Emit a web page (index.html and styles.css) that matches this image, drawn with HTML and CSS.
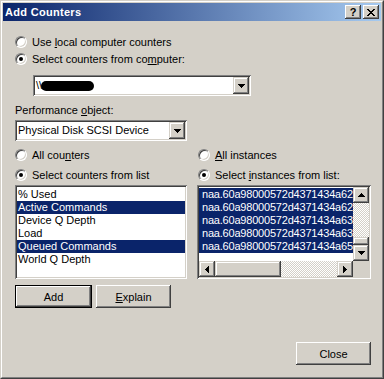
FILE: index.html
```html
<!DOCTYPE html>
<html>
<head>
<meta charset="utf-8">
<link rel="stylesheet" href="styles.css">
</head>
<body>
<div class="window">
  <div class="frame">
    <div class="titlebar">
      <span class="title">Add Counters</span>
      <div class="tbtns">
        <span class="tbtn q">?</span>
        <span class="tbtn">
          <svg width="8" height="7" viewBox="0 0 8 7" shape-rendering="crispEdges"><path d="M0 0h2v1h-2zM6 0h2v1h-2zM1 1h2v1h-2zM5 1h2v1h-2zM2 2h4v1h-4zM3 3h2v1h-2zM2 4h4v1h-4zM1 5h2v1h-2zM5 5h2v1h-2zM0 6h2v1h-2zM6 6h2v1h-2z" fill="#000"/></svg>
        </span>
      </div>
    </div>
    <div class="content">
      <div class="radio"><span class="rc"></span><span>Use <u>l</u>ocal computer counters</span></div>
      <div class="radio"><span class="rc on"></span><span>Select counters from co<u>m</u>puter:</span></div>
      <div class="combo c1">
        <span class="val">\\<span class="blob"></span></span>
        <span class="dd"><svg width="7" height="4" viewBox="0 0 7 4" shape-rendering="crispEdges"><path d="M0 0h7v1h-1v1h-1v1h-1v1h-1v-1h-1v-1h-1v-1h-1z"/></svg></span>
      </div>
      <div class="lbl">Performance <u>o</u>bject:</div>
      <div class="combo c2">
        <span class="val">Physical Disk SCSI Device</span>
        <span class="dd"><svg width="7" height="4" viewBox="0 0 7 4" shape-rendering="crispEdges"><path d="M0 0h7v1h-1v1h-1v1h-1v1h-1v-1h-1v-1h-1v-1h-1z"/></svg></span>
      </div>
      <div class="cols">
        <div class="col left">
          <div class="radio"><span class="rc"></span><span>All cou<u>n</u>ters</span></div>
          <div class="radio r2"><span class="rc on"></span><span>Select counters from list</span></div>
          <div class="list llist">
            <div class="item">% Used</div>
            <div class="item sel">Active Commands</div>
            <div class="item">Device Q Depth</div>
            <div class="item">Load</div>
            <div class="item sel">Queued Commands</div>
            <div class="item">World Q Depth</div>
          </div>
          <div class="btnrow">
            <div class="btn def">Add</div>
            <div class="btn"><span><u>E</u>xplain</span></div>
          </div>
        </div>
        <div class="col right">
          <div class="radio"><span class="rc"></span><span><u>A</u>ll instances</span></div>
          <div class="radio r2"><span class="rc on"></span><span>Select <u>i</u>nstances from list:</span></div>
          <div class="list rlist">
            <div class="items">
              <div class="item sel">naa.60a98000572d4371434a62</div>
              <div class="item sel">naa.60a98000572d4371434a62</div>
              <div class="item sel">naa.60a98000572d4371434a63</div>
              <div class="item sel">naa.60a98000572d4371434a63</div>
              <div class="item sel">naa.60a98000572d4371434a65</div>
            </div>
            <div class="vscroll">
              <span class="sbtn"><svg width="7" height="4" viewBox="0 0 7 4" shape-rendering="crispEdges"><path d="M3 0h1v1h1v1h1v1h1v1h-7v-1h1v-1h1v-1h1z"/></svg></span>
              <span class="track"><span class="vthumb"></span></span>
              <span class="sbtn"><svg width="7" height="4" viewBox="0 0 7 4" shape-rendering="crispEdges"><path d="M0 0h7v1h-1v1h-1v1h-1v1h-1v-1h-1v-1h-1v-1h-1z"/></svg></span>
            </div>
            <div class="hscroll">
              <span class="sbtn"><svg width="4" height="7" viewBox="0 0 4 7" shape-rendering="crispEdges"><path d="M3 0h1v7h-1v-1h-1v-1h-1v-1h-1v-1h1v-1h1v-1h1z"/></svg></span>
              <span class="htrack"><span class="hthumb"></span></span>
              <span class="sbtn"><svg width="4" height="7" viewBox="0 0 4 7" shape-rendering="crispEdges"><path d="M0 0h1v1h1v1h1v1h1v1h-1v1h-1v1h-1v1h-1z"/></svg></span>
            </div>
            <div class="corner"></div>
          </div>
        </div>
      </div>
      <div class="footer">
        <div class="btn close">Close</div>
      </div>
    </div>
  </div>
</div>
</body>
</html>
```

FILE: styles.css
```css
* { box-sizing: border-box; }
html, body { margin: 0; padding: 0; }
body {
  width: 384px; height: 379px; overflow: hidden;
  font-family: "Liberation Sans", Arial, sans-serif;
  font-size: 11px; color: #000; background: #d4d0c8;
}
.window {
  width: 384px; height: 379px; background: #d4d0c8;
  border: 1px solid; border-color: #d4d0c8 #404040 #404040 #d4d0c8;
}
.frame {
  height: 100%;
  border: 1px solid; border-color: #fff #808080 #808080 #fff;
  padding: 1px; display: flex; flex-direction: column;
}
.titlebar {
  height: 18px; flex: none;
  display: flex; align-items: center; justify-content: space-between;
  padding: 0 2px 0 2px;
  background: linear-gradient(to right, #0a246a, #a6caf0);
}
.title { color: #fff; font-weight: bold; font-size: 11px; letter-spacing: 0.3px; }
.tbtns { display: flex; gap: 2px; }
.tbtn {
  width: 16px; height: 14px; background: #d4d0c8;
  display: flex; align-items: center; justify-content: center;
  box-shadow: inset -1px -1px #404040, inset 1px 1px #fff, inset -2px -2px #808080, inset 2px 2px #d4d0c8;
}
.tbtn.q { font-weight: bold; font-size: 11px; line-height: 14px; padding-bottom: 1px; }
.content {
  flex: 1; padding: 12px 10px 0 12px;
  display: flex; flex-direction: column;
}
.radio { height: 17px; display: flex; align-items: center; gap: 5px; white-space: nowrap; }
.rc {
  width: 12px; height: 12px; flex: none; border-radius: 50%; background: #fff;
  border: 1px solid; border-color: #808080 #fff #fff #808080;
  box-shadow: inset 1px 1px #404040, inset -1px -1px #d4d0c8;
  position: relative;
}
.rc.on::after {
  content: ""; position: absolute; left: 3px; top: 3px;
  width: 4px; height: 4px; border-radius: 50%; background: #000;
}
.combo {
  height: 21px; background: #fff; padding: 2px; display: flex;
  box-shadow: inset 1px 1px #808080, inset -1px -1px #fff, inset 2px 2px #404040, inset -2px -2px #d4d0c8;
}
.c1 { width: 218px; margin: 8px 0 0 18px; }
.c2 { width: 172px; margin-top: 3px; }
.val { flex: 1; line-height: 17px; padding-left: 1px; white-space: nowrap; display: flex; align-items: center; }
.blob { display: inline-block; width: 53px; height: 10px; background: #000; border-radius: 5px; margin-left: -1px; }
.dd, .sbtn {
  width: 16px; height: 17px; background: #d4d0c8; flex: none;
  display: flex; align-items: center; justify-content: center;
  box-shadow: inset -1px -1px #404040, inset 1px 1px #d4d0c8, inset -2px -2px #808080, inset 2px 2px #fff;
}
.lbl { margin-top: 8px; height: 13px; line-height: 13px; }
.cols { display: flex; gap: 10px; margin-top: 5px; }
.col.left { width: 172px; }
.col.right { width: 174px; }
.right .radio .rc { margin-left: 1px; }
.r2 { margin-top: 3px; }
.list {
  margin-top: 2px; height: 94px; background: #fff; padding: 2px;
  box-shadow: inset 1px 1px #808080, inset -1px -1px #fff, inset 2px 2px #404040, inset -2px -2px #d4d0c8;
}
.llist { padding-top: 3px; }
.item { height: 13px; line-height: 13px; padding-left: 1px; white-space: nowrap; overflow: hidden; }
.item.sel { background: #0a246a; color: #fff; }
.rlist {
  display: grid; grid-template-columns: 1fr 16px; grid-template-rows: 1fr 16px;
}
.items { padding-top: 1px; overflow: hidden; min-width: 0; }
.rlist .item { padding-left: 3px; letter-spacing: -0.2px; }
.vscroll { display: flex; flex-direction: column; }
.vscroll .sbtn { height: 16px; }
.track, .htrack {
  flex: 1; position: relative; display: flex;
  background: repeating-conic-gradient(#d4d0c8 0 25%, #fff 0 50%) 0 0 / 2px 2px;
}
.track { flex-direction: column; justify-content: flex-end; }
.vthumb, .hthumb {
  background: #d4d0c8;
  box-shadow: inset -1px -1px #404040, inset 1px 1px #d4d0c8, inset -2px -2px #808080, inset 2px 2px #fff;
}
.vthumb { height: 8px; width: 16px; }
.hscroll { display: flex; }
.hscroll .sbtn { height: 16px; }
.hthumb { width: 66px; height: 16px; }
.corner { background: #d4d0c8; }
.btnrow { display: flex; gap: 4px; margin-top: 6px; }
.btn {
  width: 75px; height: 23px; background: #d4d0c8;
  display: flex; align-items: center; justify-content: center;
  box-shadow: inset -1px -1px #404040, inset 1px 1px #fff, inset -2px -2px #808080, inset 2px 2px #d4d0c8;
}
.btn.def {
  width: 77px;
  box-shadow: inset -1px -1px #000, inset 1px 1px #000, inset -2px -2px #404040, inset 2px 2px #fff, inset -3px -3px #808080;
}
.footer { display: flex; justify-content: flex-end; margin-top: 34px; }
```
